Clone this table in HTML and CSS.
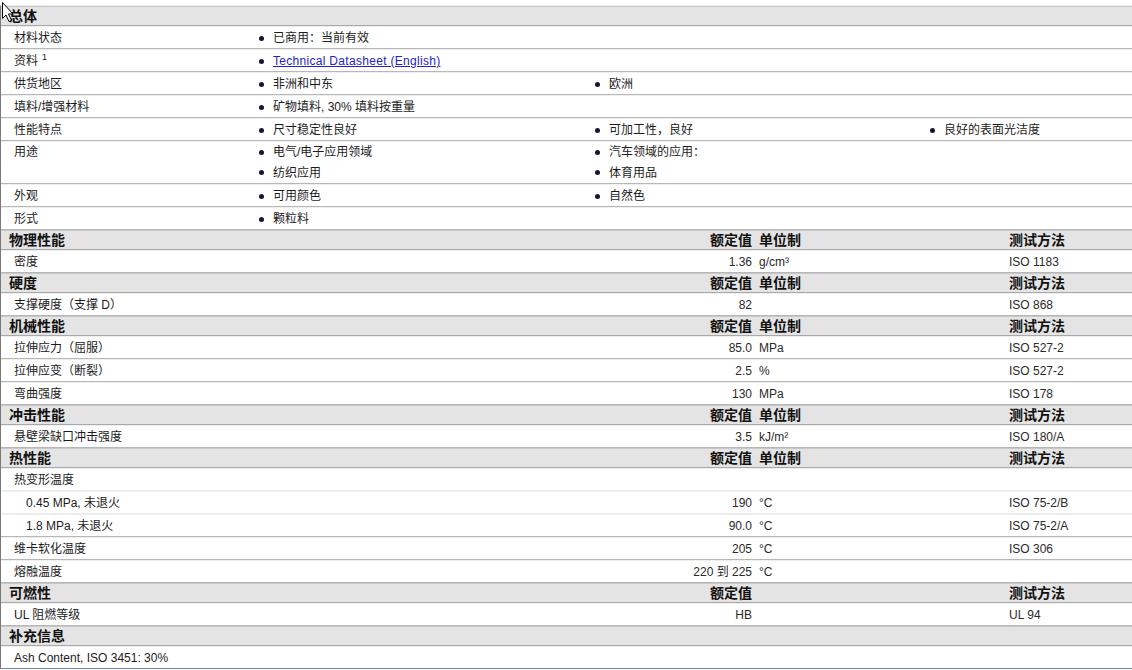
FILE: index.html
```html
<!DOCTYPE html>
<html lang="zh-CN">
<head>
<meta charset="utf-8">
<title>Datasheet</title>
<link rel="stylesheet" href="styles.css">
</head>
<body>
<div class="sheet">
  <div class="sec"><div class="sec-title">总体</div></div>

  <div class="row info"><div class="lbl">材料状态</div><ul class="vals"><li>已商用：当前有效</li></ul></div>
  <div class="row info"><div class="lbl">资料<sup class="fn">1</sup></div><ul class="vals"><li><a class="link" href="#">Technical Datasheet (English)</a></li></ul></div>
  <div class="row info"><div class="lbl">供货地区</div><ul class="vals"><li>非洲和中东</li><li>欧洲</li></ul></div>
  <div class="row info"><div class="lbl">填料/增强材料</div><ul class="vals"><li>矿物填料, 30% 填料按重量</li></ul></div>
  <div class="row info"><div class="lbl">性能特点</div><ul class="vals"><li>尺寸稳定性良好</li><li>可加工性，良好</li><li>良好的表面光洁度</li></ul></div>
  <div class="row info multi"><div class="lbl">用途</div><ul class="vals two"><li>电气/电子应用领域</li><li>汽车领域的应用：</li><li>纺织应用</li><li>体育用品</li></ul></div>
  <div class="row info"><div class="lbl">外观</div><ul class="vals"><li>可用颜色</li><li>自然色</li></ul></div>
  <div class="row info"><div class="lbl">形式</div><ul class="vals"><li>颗粒料</li></ul></div>

  <div class="sec cols"><div class="sec-title">物理性能</div><div class="h-val">额定值</div><div class="h-unit">单位制</div><div class="h-method">测试方法</div></div>
  <div class="row prop"><div class="lbl">密度</div><div class="val">1.36</div><div class="unit">g/cm³</div><div class="method">ISO 1183</div></div>

  <div class="sec cols"><div class="sec-title">硬度</div><div class="h-val">额定值</div><div class="h-unit">单位制</div><div class="h-method">测试方法</div></div>
  <div class="row prop"><div class="lbl">支撑硬度（支撑 D）</div><div class="val">82</div><div class="unit"></div><div class="method">ISO 868</div></div>

  <div class="sec cols"><div class="sec-title">机械性能</div><div class="h-val">额定值</div><div class="h-unit">单位制</div><div class="h-method">测试方法</div></div>
  <div class="row prop"><div class="lbl">拉伸应力（屈服）</div><div class="val">85.0</div><div class="unit">MPa</div><div class="method">ISO 527-2</div></div>
  <div class="row prop"><div class="lbl">拉伸应变（断裂）</div><div class="val">2.5</div><div class="unit">%</div><div class="method">ISO 527-2</div></div>
  <div class="row prop"><div class="lbl">弯曲强度</div><div class="val">130</div><div class="unit">MPa</div><div class="method">ISO 178</div></div>

  <div class="sec cols"><div class="sec-title">冲击性能</div><div class="h-val">额定值</div><div class="h-unit">单位制</div><div class="h-method">测试方法</div></div>
  <div class="row prop"><div class="lbl">悬壁梁缺口冲击强度</div><div class="val">3.5</div><div class="unit">kJ/m²</div><div class="method">ISO 180/A</div></div>

  <div class="sec cols"><div class="sec-title">热性能</div><div class="h-val">额定值</div><div class="h-unit">单位制</div><div class="h-method">测试方法</div></div>
  <div class="row prop soft"><div class="lbl">热变形温度</div><div class="val"></div><div class="unit"></div><div class="method"></div></div>
  <div class="row prop soft"><div class="lbl sub">0.45 MPa, 未退火</div><div class="val">190</div><div class="unit">°C</div><div class="method">ISO 75-2/B</div></div>
  <div class="row prop"><div class="lbl sub">1.8 MPa, 未退火</div><div class="val">90.0</div><div class="unit">°C</div><div class="method">ISO 75-2/A</div></div>
  <div class="row prop"><div class="lbl">维卡软化温度</div><div class="val">205</div><div class="unit">°C</div><div class="method">ISO 306</div></div>
  <div class="row prop"><div class="lbl">熔融温度</div><div class="val">220 到 225</div><div class="unit">°C</div><div class="method"></div></div>

  <div class="sec cols"><div class="sec-title">可燃性</div><div class="h-val">额定值</div><div class="h-unit"></div><div class="h-method">测试方法</div></div>
  <div class="row prop"><div class="lbl">UL 阻燃等级</div><div class="val">HB</div><div class="unit"></div><div class="method">UL 94</div></div>

  <div class="sec"><div class="sec-title">补充信息</div></div>
  <div class="row note"><div class="lbl">Ash Content, ISO 3451: 30%</div></div>
</div>

<svg class="cursor" width="13" height="22" viewBox="0 0 13 22" aria-hidden="true">
  <path d="M1.5 1.5 L1.5 17.5 L5 14 L8 20.5 L10.5 19.5 L7.5 13 L12 13 Z" fill="#fff" stroke="#000" stroke-width="1"/>
</svg>
</body>
</html>
```

FILE: styles.css
```css
* { box-sizing: border-box; }

html, body {
  margin: 0;
  padding: 0;
  background: #ffffff;
}

body {
  font-family: "Liberation Sans", "Noto Sans CJK SC", sans-serif;
  font-size: 12px;
  color: #1c1c1c;
  width: 1132px;
  height: 670px;
  overflow: hidden;
  position: relative;
}

.sheet {
  margin-top: 5px;
  border-top: 1px solid #ececec;
  border-left: 1px solid #7a7a7a;
  width: 1132px;
}

/* section headers */
.sec {
  height: 20px;
  background: #e4e4e4;
  border-top: 1px solid #c8c8c8;
  border-bottom: 1px solid #a9a9a9;
  font-size: 14px;
  font-weight: bold;
  line-height: 18px;
  color: #111;
}

.sec.cols {
  display: grid;
  grid-template-columns: 604px 147px 257px 1fr;
}

.sec-title {
  padding-left: 8px;
  white-space: nowrap;
}

.h-val { text-align: right; }
.h-unit { padding-left: 7px; }

/* data rows */
.row {
  height: 23px;
  padding-top: 1px;
  border-top: 1px solid #efefef;
  border-bottom: 1px solid #b7b7b7;
  line-height: 20px;
}

.row.soft { border-bottom-color: #ececec; }

.lbl {
  padding-left: 13px;
  white-space: nowrap;
}

.lbl.sub { padding-left: 25px; }

.fn {
  font-size: 9px;
  line-height: 9px;
  vertical-align: top;
  margin-left: 4px;
  position: relative;
  top: 2px;
}

/* info rows */
.info {
  display: grid;
  grid-template-columns: 255px 1fr;
}

.vals {
  list-style: none;
  margin: 0;
  padding: 0;
  display: grid;
  grid-template-columns: 336px 335px 1fr;
}

.vals.two { grid-template-columns: 336px 335px; }

.vals li {
  display: flex;
  align-items: center;
  padding-left: 3px;
  white-space: nowrap;
}

.vals li::before {
  content: "";
  width: 5px;
  height: 5px;
  border-radius: 50%;
  background: #15153a;
  margin-right: 9px;
  flex: none;
}

.info.multi {
  height: 43px;
  padding-top: 0;
  line-height: 20px;
}

.link {
  color: #2323c8;
  text-decoration: underline;
  letter-spacing: 0.3px;
}

/* property rows */
.prop {
  display: grid;
  grid-template-columns: 604px 147px 257px 1fr;
}

.val {
  text-align: right;
  color: #2a2a2a;
  white-space: nowrap;
}

.unit {
  padding-left: 7px;
  color: #2a2a2a;
}

.method { color: #2a2a2a; }

.note { border-bottom-color: #6f87a0; }

.cursor {
  position: absolute;
  left: 1px;
  top: 1px;
}
```
